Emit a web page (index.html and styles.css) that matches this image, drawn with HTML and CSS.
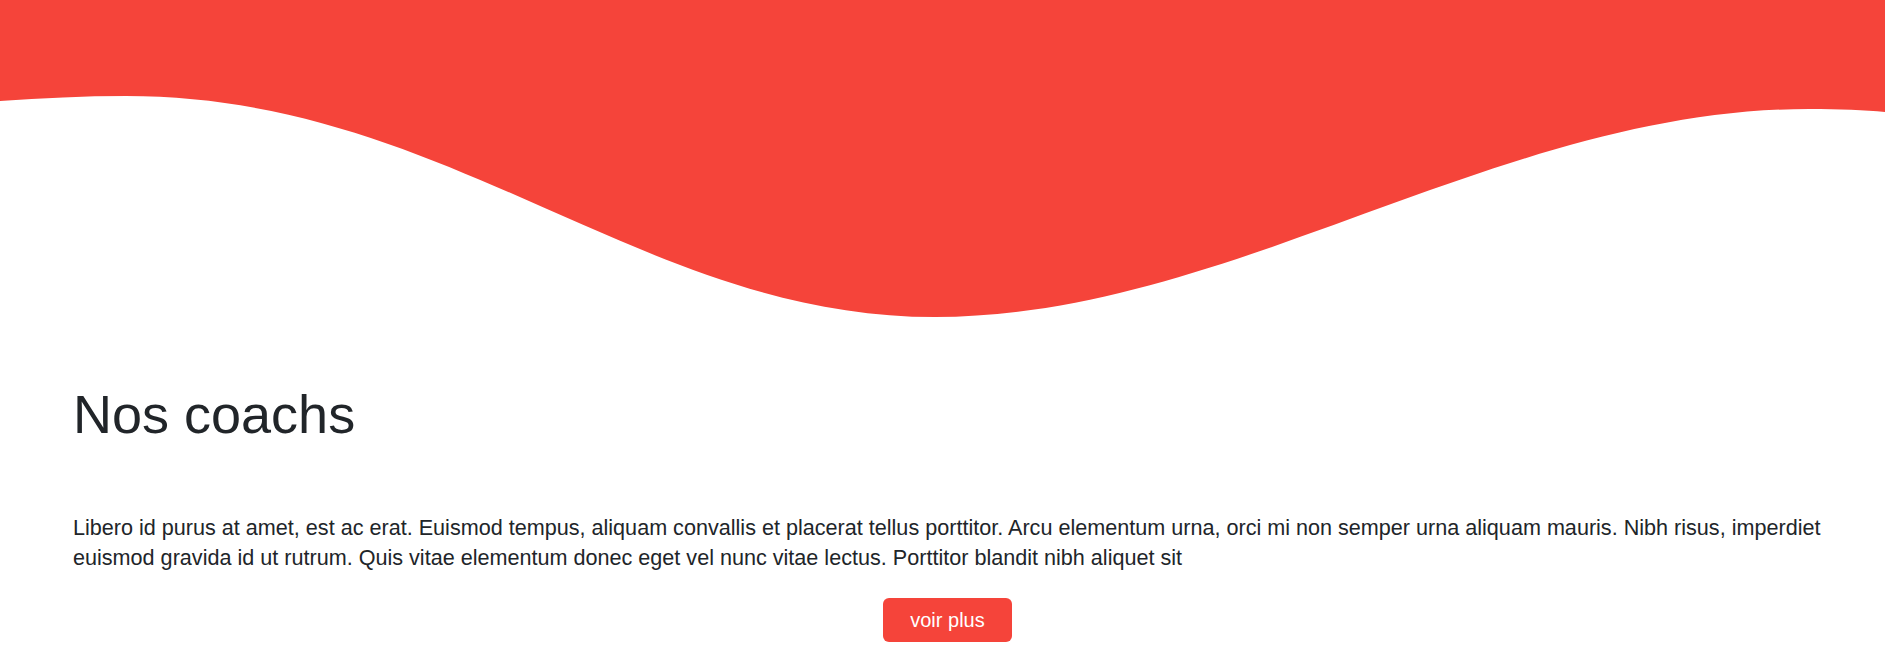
FILE: index.html
```html
<!DOCTYPE html>
<html lang="fr">
<head>
<meta charset="utf-8">
<title>Nos coachs</title>
<link rel="stylesheet" href="styles.css">
</head>
<body>
<header class="wave">
  <svg class="wave-svg" viewBox="0 0 1885 340" preserveAspectRatio="none" xmlns="http://www.w3.org/2000/svg">
    <path fill="#f5443a" d="M0,0 H1885 V112 C1865,110 1840,109 1809,109 C1500,109 1230,317 935,317 C640,317 450,96 126,96 C84,96 42,98 0,101 Z"/>
  </svg>
</header>
<main class="content">
  <h1 class="title">Nos coachs</h1>
  <p class="lead">Libero id purus at amet, est ac erat. Euismod tempus, aliquam convallis et placerat tellus porttitor. Arcu elementum urna, orci mi non semper urna aliquam mauris. Nibh risus, imperdiet euismod gravida id ut rutrum. Quis vitae elementum donec eget vel nunc vitae lectus. Porttitor blandit nibh aliquet sit</p>
  <div class="actions">
    <a class="btn" href="#">voir plus</a>
  </div>
</main>
</body>
</html>
```

FILE: styles.css
```css
html, body {
  margin: 0;
  padding: 0;
  background: #ffffff;
}
body {
  font-family: "Liberation Sans", Arial, sans-serif;
  color: #212529;
}
.wave {
  display: block;
  height: 340px;
}
.wave-svg {
  display: block;
  width: 100%;
  height: 340px;
}
.content {
  padding: 0 52px 0 73px;
}
.title {
  margin: 42px 0 0 0;
  font-size: 54px;
  font-weight: 400;
  line-height: 1.2;
  color: #212529;
}
.lead {
  margin: 66px 0 0 0;
  font-size: 21.6px;
  line-height: 30.5px;
  color: #212529;
}
.actions {
  display: flex;
  justify-content: center;
  margin-top: 24px;
  margin-right: 11px;
}
.btn {
  display: inline-block;
  background: #f5443a;
  color: #ffffff;
  text-decoration: none;
  font-size: 20px;
  line-height: 30px;
  padding: 7px 27px;
  border-radius: 6px;
}
```
